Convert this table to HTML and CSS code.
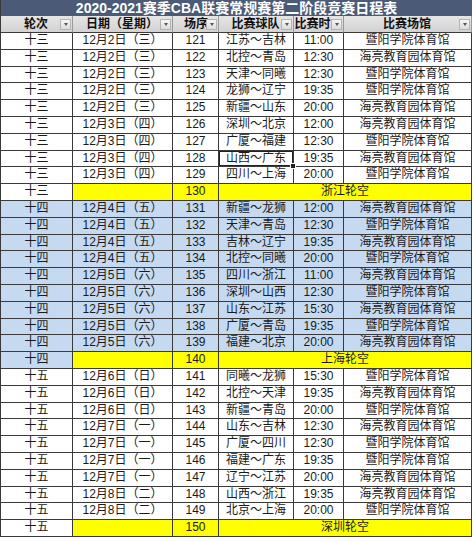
FILE: index.html
```html
<!DOCTYPE html>
<html lang="zh">
<head>
<meta charset="utf-8">
<title>CBA 赛程</title>
<link rel="stylesheet" href="styles.css">
</head>
<body>
<div class="sheet">
  <div class="title">2020-2021赛季CBA联赛常规赛第二阶段竞赛日程表</div>

  <div class="hd"><span class="lbl">轮次</span><span class="dd"></span></div>
  <div class="hd"><span class="lbl">日期（星期）</span><span class="dd"></span></div>
  <div class="hd"><span class="lbl">场序</span><span class="dd"></span></div>
  <div class="hd"><span class="lbl">比赛球队</span><span class="dd"></span></div>
  <div class="hd"><span class="lbl tight">比赛时</span><span class="dd"></span></div>
  <div class="hd"><span class="lbl">比赛场馆</span><span class="dd"></span></div>

  <div class="c">十三</div><div class="c">12月2日（三）</div><div class="c">121</div><div class="c">江苏～吉林</div><div class="c">11:00</div><div class="c">暨阳学院体育馆</div>
  <div class="c">十三</div><div class="c">12月2日（三）</div><div class="c">122</div><div class="c">北控～青岛</div><div class="c">12:30</div><div class="c">海亮教育园体育馆</div>
  <div class="c">十三</div><div class="c">12月2日（三）</div><div class="c">123</div><div class="c">天津～同曦</div><div class="c">12:30</div><div class="c">暨阳学院体育馆</div>
  <div class="c">十三</div><div class="c">12月2日（三）</div><div class="c">124</div><div class="c">龙狮～辽宁</div><div class="c">19:35</div><div class="c">暨阳学院体育馆</div>
  <div class="c">十三</div><div class="c">12月2日（三）</div><div class="c">125</div><div class="c">新疆～山东</div><div class="c">20:00</div><div class="c">海亮教育园体育馆</div>
  <div class="c">十三</div><div class="c">12月3日（四）</div><div class="c">126</div><div class="c">深圳～北京</div><div class="c">12:00</div><div class="c">海亮教育园体育馆</div>
  <div class="c">十三</div><div class="c">12月3日（四）</div><div class="c">127</div><div class="c">广厦～福建</div><div class="c">12:30</div><div class="c">暨阳学院体育馆</div>
  <div class="c">十三</div><div class="c">12月3日（四）</div><div class="c">128</div><div class="c sel">山西～广东<span class="handle"></span></div><div class="c">19:35</div><div class="c">海亮教育园体育馆</div>
  <div class="c">十三</div><div class="c">12月3日（四）</div><div class="c">129</div><div class="c">四川～上海</div><div class="c">20:00</div><div class="c">暨阳学院体育馆</div>
  <div class="c">十三</div><div class="c y"></div><div class="c y">130</div><div class="c y span3">浙江轮空</div>

  <div class="c b">十四</div><div class="c b">12月4日（五）</div><div class="c b">131</div><div class="c b">新疆～龙狮</div><div class="c b">12:00</div><div class="c b">海亮教育园体育馆</div>
  <div class="c b">十四</div><div class="c b">12月4日（五）</div><div class="c b">132</div><div class="c b">天津～青岛</div><div class="c b">12:30</div><div class="c b">暨阳学院体育馆</div>
  <div class="c b">十四</div><div class="c b">12月4日（五）</div><div class="c b">133</div><div class="c b">吉林～辽宁</div><div class="c b">19:35</div><div class="c b">海亮教育园体育馆</div>
  <div class="c b">十四</div><div class="c b">12月4日（五）</div><div class="c b">134</div><div class="c b">北控～同曦</div><div class="c b">20:00</div><div class="c b">暨阳学院体育馆</div>
  <div class="c b">十四</div><div class="c b">12月5日（六）</div><div class="c b">135</div><div class="c b">四川～浙江</div><div class="c b">11:00</div><div class="c b">海亮教育园体育馆</div>
  <div class="c b">十四</div><div class="c b">12月5日（六）</div><div class="c b">136</div><div class="c b">深圳～山西</div><div class="c b">12:30</div><div class="c b">暨阳学院体育馆</div>
  <div class="c b">十四</div><div class="c b">12月5日（六）</div><div class="c b">137</div><div class="c b">山东～江苏</div><div class="c b">15:30</div><div class="c b">海亮教育园体育馆</div>
  <div class="c b">十四</div><div class="c b">12月5日（六）</div><div class="c b">138</div><div class="c b">广厦～青岛</div><div class="c b">19:35</div><div class="c b">暨阳学院体育馆</div>
  <div class="c b">十四</div><div class="c b">12月5日（六）</div><div class="c b">139</div><div class="c b">福建～北京</div><div class="c b">20:00</div><div class="c b">海亮教育园体育馆</div>
  <div class="c b">十四</div><div class="c y"></div><div class="c y">140</div><div class="c y span3">上海轮空</div>

  <div class="c">十五</div><div class="c">12月6日（日）</div><div class="c">141</div><div class="c">同曦～龙狮</div><div class="c">15:30</div><div class="c">暨阳学院体育馆</div>
  <div class="c">十五</div><div class="c">12月6日（日）</div><div class="c">142</div><div class="c">北控～天津</div><div class="c">19:35</div><div class="c">海亮教育园体育馆</div>
  <div class="c">十五</div><div class="c">12月6日（日）</div><div class="c">143</div><div class="c">新疆～青岛</div><div class="c">20:00</div><div class="c">暨阳学院体育馆</div>
  <div class="c">十五</div><div class="c">12月7日（一）</div><div class="c">144</div><div class="c">山东～吉林</div><div class="c">12:30</div><div class="c">海亮教育园体育馆</div>
  <div class="c">十五</div><div class="c">12月7日（一）</div><div class="c">145</div><div class="c">广厦～四川</div><div class="c">12:30</div><div class="c">暨阳学院体育馆</div>
  <div class="c">十五</div><div class="c">12月7日（一）</div><div class="c">146</div><div class="c">福建～广东</div><div class="c">19:35</div><div class="c">暨阳学院体育馆</div>
  <div class="c">十五</div><div class="c">12月7日（一）</div><div class="c">147</div><div class="c">辽宁～江苏</div><div class="c">20:00</div><div class="c">海亮教育园体育馆</div>
  <div class="c">十五</div><div class="c">12月8日（二）</div><div class="c">148</div><div class="c">山西～浙江</div><div class="c">19:35</div><div class="c">海亮教育园体育馆</div>
  <div class="c">十五</div><div class="c">12月8日（二）</div><div class="c">149</div><div class="c">北京～上海</div><div class="c">20:00</div><div class="c">暨阳学院体育馆</div>
  <div class="c">十五</div><div class="c y"></div><div class="c y">150</div><div class="c y span3">深圳轮空</div>
</div>
</body>
</html>
```
FILE: styles.css
```css
html, body {
  margin: 0;
  padding: 0;
  background: #ffffff;
}
.sheet {
  width: 471px;
  display: grid;
  grid-template-columns: 72px 100px 46px 75px 50px 128px;
  grid-template-rows: 16px 17px;
  grid-auto-rows: 16.8px;
  border-left: 1px solid #3a3a3a;
  font-family: "Liberation Sans", "Noto Sans CJK SC", sans-serif;
  font-size: 12px;
  color: #1a1a1a;
}
.title {
  grid-column: 1 / -1;
  background: #4b5a76;
  color: #ffffff;
  font-weight: bold;
  font-size: 14px;
  line-height: 16px;
  text-align: center;
  white-space: nowrap;
  overflow: hidden;
}
.hd {
  display: flex;
  align-items: center;
  background: linear-gradient(#e6e6e6, #d2d2d2);
  border-right: 1px solid #9a9a9a;
  border-bottom: 1px solid #3a3a3a;
  box-sizing: border-box;
  font-weight: bold;
  font-size: 12px;
  color: #111111;
  min-width: 0;
}
.lbl {
  flex: 1 1 auto;
  min-width: 0;
  text-align: center;
  padding-left: 11px;
  white-space: nowrap;
  line-height: 16px;
}
.lbl.tight {
  padding-left: 0;
}
.dd {
  flex: 0 0 11px;
  width: 11px;
  height: 11px;
  margin-right: 1px;
  box-sizing: border-box;
  border: 1px solid #b4b4b4;
  background: linear-gradient(#f6f6f6, #dcdcdc);
  display: flex;
  align-items: center;
  justify-content: center;
}
.dd::after {
  content: "";
  width: 0;
  height: 0;
  border-left: 2.5px solid transparent;
  border-right: 2.5px solid transparent;
  border-top: 3px solid #555555;
}
.c {
  border-right: 1px solid #3a3a3a;
  border-bottom: 1px solid #3a3a3a;
  box-sizing: border-box;
  text-align: center;
  line-height: 15.8px;
  white-space: nowrap;
  overflow: hidden;
  background: #ffffff;
}
.b {
  background: #c5d9f1;
}
.y {
  background: #ffff00;
}
.span3 {
  grid-column: span 3;
}
.sel {
  position: relative;
  overflow: visible;
  box-shadow: inset 0 0 0 1px #222222, inset 0 0 0 2px #ffffff;
}
.handle {
  position: absolute;
  right: -3px;
  bottom: -3px;
  width: 4px;
  height: 4px;
  background: #222222;
  border: 1px solid #ffffff;
}
```
